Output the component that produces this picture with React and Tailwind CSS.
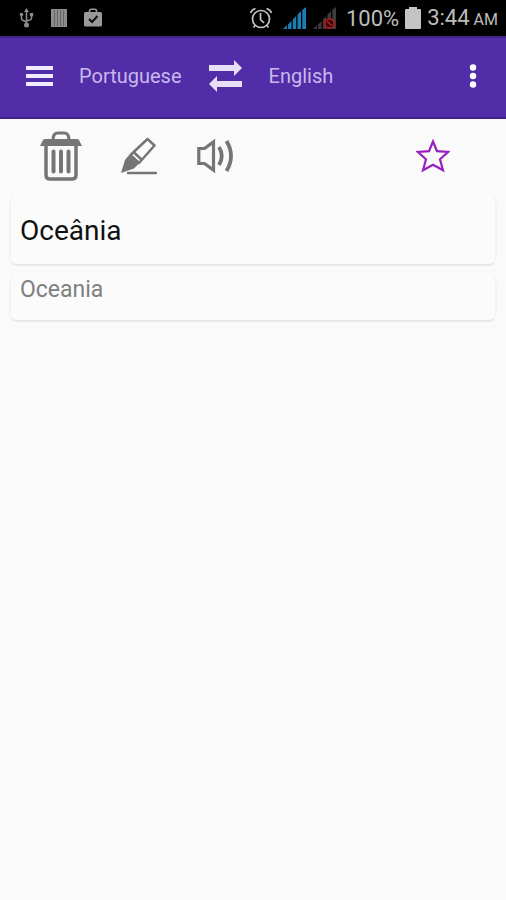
function StatusBar() {
  return (
    <div className="flex h-9 items-center justify-between bg-black pl-[19px] pr-2 text-[#bdbdbd]">
      <div className="flex items-center gap-[17px]">
        <svg className="h-5 w-[15px]" viewBox="0 0 15 20" fill="none" stroke="#8c8c8c" strokeWidth="1.6" aria-hidden="true">
          <path d="M7.500 3v14M2.500 7v3.500q0 1.500 1.800 2.100L7.500 14M12.500 7v3q0 1.500-1.800 2.100L7.500 13" />
          <path d="M7.500 0l2.500 4H5z" fill="#8c8c8c" stroke="none" />
          <circle cx="7.500" cy="17" r="2.500" fill="#8c8c8c" stroke="none" />
          <circle cx="2.500" cy="6.500" r="1.800" fill="#8c8c8c" stroke="none" />
          <path d="M10.800 5h3.400v3.200h-3.400z" fill="#8c8c8c" stroke="none" />
        </svg>
        <svg className="h-[18px] w-4" viewBox="0 0 16 18" aria-hidden="true">
          <path d="M0 0h16v18H0z" fill="#8c8c8c" />
          <path d="M3.500 1v16M6.500 1v16M9.500 1v16M12.500 1v16" stroke="#666" strokeWidth="1" />
        </svg>
        <svg className="h-5 w-[18px]" viewBox="0 0 18 20" aria-hidden="true">
          <path d="M0 5.500q0-1.500 1.500-1.500h15q1.500 0 1.500 1.500V17q0 1.500-1.500 1.500h-15Q0 18.500 0 17z" fill="#999" />
          <path d="M5.500 5V3q0-1.700 1.700-1.700h3.600q1.700 0 1.700 1.700v2" fill="none" stroke="#999" strokeWidth="1.600" />
          <path d="M5 11l3 3 5.500-6" fill="none" stroke="#111" strokeWidth="2" />
        </svg>
      </div>
      <div className="flex items-center gap-1.5">
        <svg className="h-6 w-6" viewBox="0 0 24 24" fill="none" stroke="#c4c4c4" strokeWidth="1.700" aria-hidden="true">
          <circle cx="12" cy="13" r="8.500" />
          <path d="M11.500 7v6.500l3.500 3.500M1.500 7q1.300-3.500 5-4.500M22.500 7q-1.300-3.500-5-4.500M6.500 19l-2 2.500M17.500 19l2 2.500" />
        </svg>
        <div className="flex gap-[7px] px-1">
          <svg className="h-[22px] w-[23px]" viewBox="0 0 23 22" fill="#1b7fb5" aria-hidden="true">
            <path d="M0 22l4-4v4zM5 17.500l3.500-3.500v8H5zM9.800 12.500l3.400-3.500v13H9.800zM14.500 7.500L18 4v18h-3.500zM19.300 3L23 0v22h-3.700z" />
          </svg>
          <svg className="h-[22px] w-[23px]" viewBox="0 0 23 22" fill="#3c3c3c" aria-hidden="true">
            <path d="M0 22l4-4v4zM5 17.500l3.500-3.500v8H5zM9.800 12.500l3.400-3.500v13H9.800zM14.500 7.500L18 4v18h-3.500zM19.300 3L23 0v22h-3.700z" />
            <circle cx="16.500" cy="16.500" r="4.600" fill="#250606" stroke="#a51a1a" strokeWidth="2" />
            <path d="M14 14.500l5 4" stroke="#a51a1a" strokeWidth="2" />
          </svg>
        </div>
        <span className="pt-0.5 text-[22px] leading-8">100%</span>
        <svg className="h-[22px] w-4" viewBox="0 0 16 22" fill="#c4c4c4" aria-hidden="true">
          <path d="M4 0h8v2h3q1 0 1 1v18q0 1-1 1H1q-1 0-1-1V3q0-1 1-1h3z" />
        </svg>
        <span className="flex items-baseline gap-1 pt-0.5 text-[22px] leading-8">
          3:44 <span className="text-base leading-8">AM</span>
        </span>
      </div>
    </div>
  );
}

function Header() {
  return (
    <header className="flex h-[83px] items-center gap-[26px] border-y-2 border-t-[#3f2480] border-b-[#40208b] bg-[#512da8] pb-1 pl-[26px] pr-[29px] text-xl text-[#c9b9ec]">
      <button type="button" aria-label="Open menu">
        <svg className="h-5 w-[27px]" viewBox="0 0 27 20" fill="#f0ebfa" aria-hidden="true">
          <path d="M0 0h27v4H0zM0 8h27v4H0zM0 16h27v4H0z" />
        </svg>
      </button>
      <button type="button">Portuguese</button>
      <button type="button" aria-label="Swap languages">
        <svg className="h-8 w-[35px]" viewBox="0 0 35 32" fill="#e6dff5" aria-hidden="true">
          <path d="M1 5h25V0l8 8-8 8v-5H1zM34 21H9v-5l-8 8 8 8v-5h25z" />
        </svg>
      </button>
      <button type="button">English</button>
      <button type="button" aria-label="More options" className="ml-auto">
        <svg className="h-6 w-2" viewBox="0 0 8 24" fill="#fff" aria-hidden="true">
          <circle cx="4" cy="3.500" r="3.200" />
          <circle cx="4" cy="12" r="3.200" />
          <circle cx="4" cy="20.500" r="3.200" />
        </svg>
      </button>
    </header>
  );
}

function Toolbar() {
  return (
    <div className="flex h-[75px] items-center gap-[39px] pb-px pl-10 pr-14">
      <button type="button" aria-label="Clear text">
        <svg className="h-[50px] w-[42px]" viewBox="0 0 42 50" fill="none" stroke="#757575" aria-hidden="true">
          <path d="M13 9q0-7 5-7h6q5 0 5 7" strokeWidth="3.200" />
          <path d="M5 8h32q2 0 2.500 2l2.500 5H0l2.500-5q.5-2 2.500-2z" fill="#757575" stroke="none" />
          <path d="M6 14v30q0 4 4 4h22q4 0 4-4V14" strokeWidth="3.500" />
          <path d="M13.500 20.500v20M21 20.500v20M28.500 20.500v20" strokeWidth="4" strokeLinecap="round" />
        </svg>
      </button>
      <button type="button" aria-label="Write by hand">
        <svg className="h-[38px] w-9" viewBox="0 0 36 38" aria-hidden="true">
          <path d="M26.500 2l7 6.500L18 26l-8.500-8z" fill="none" stroke="#757575" strokeWidth="2.500" strokeLinejoin="round" />
          <path d="M12.500 15l8.500 8" stroke="#757575" strokeWidth="2.500" />
          <path d="M8.500 17.500l9.500 9-5 5L0 36l4-13z" fill="#757575" />
          <path d="M7 36h28" stroke="#757575" strokeWidth="2.500" strokeLinecap="round" />
        </svg>
      </button>
      <button type="button" aria-label="Speak">
        <svg className="h-9 w-[38px]" viewBox="0 0 38 36" fill="none" stroke="#757575" strokeWidth="3.200" aria-hidden="true">
          <path d="M2.800 10.500H8.500L17.500 4v28l-9-6.500H2.800z" />
          <path d="M23 9q5.500 9 0 18" strokeWidth="3.800" />
          <path d="M30.500 3q9 15 0 30" strokeWidth="3.800" />
        </svg>
      </button>
      <button type="button" aria-label="Add to favourites" className="ml-auto">
        <svg className="h-[34px] w-[34px]" viewBox="0 0 34 34" fill="none" stroke="#981ebe" strokeWidth="2.200" aria-hidden="true">
          <path d="M17 2.500l4 9.700 11 .8-8 7.300 3 11L17 25.800 7 31.300l3-11L2 13l11-.8z" />
        </svg>
      </button>
    </div>
  );
}

export default function App() {
  return (
    <div className="min-h-screen bg-[#fafafa] font-[Roboto,sans-serif]">
      <StatusBar />
      <Header />
      <Toolbar />
      <main className="flex flex-col gap-2 px-[9px]">
        <input
          type="text"
          aria-label="Portuguese text"
          defaultValue="Oceânia"
          className="h-[72px] w-full rounded-lg border-x-2 border-b-2 border-x-[#f4f4f4] border-b-[#e8e8e8] bg-[#fbfbfb] px-[9px] pt-0.5 text-[28px] text-[#111] outline-none"
        />
        <output
          aria-label="English translation"
          className="block h-12 rounded-lg border-x-2 border-b-2 border-x-[#f4f4f4] border-b-[#e8e8e8] bg-[#fbfbfb] px-[9px] text-[23px] leading-8 text-[#808080]"
        >
          Oceania
        </output>
      </main>
    </div>
  );
}
